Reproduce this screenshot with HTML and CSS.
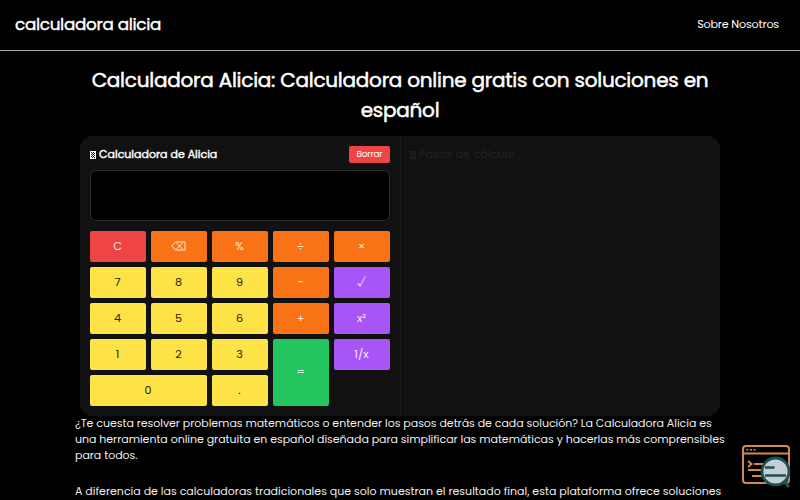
FILE: index.html
```html
<!DOCTYPE html>
<html lang="es">
<head>
<meta charset="utf-8">
<title>calculadora alicia</title>
<link rel="stylesheet" href="styles.css">
</head>
<body>
<header class="topbar">
  <a class="brand">calculadora alicia</a>
  <nav><a class="navlink">Sobre Nosotros</a></nav>
</header>
<main>
  <h1>Calculadora Alicia: Calculadora online gratis con soluciones en<br>español</h1>
  <section class="calc">
    <div class="pane">
      <div class="pane-head">
        <h2><i class="tofu"></i><span>Calculadora de Alicia</span></h2>
        <button class="clear">Borrar</button>
      </div>
      <div class="display"></div>
      <div class="keys">
        <button class="red">C</button><button class="op"><svg class="erase" width="15" height="10" viewBox="0 0 15 10" fill="none" stroke="currentColor" stroke-width="1"><path d="M.7 5 4.500 1H14v8H4.500zM5.500 2l6 6M11.500 2l-6 6"/></svg></button><button class="op">%</button><button class="op">÷</button><button class="op">×</button>
        <button>7</button><button>8</button><button>9</button><button class="op">−</button><button class="fn">√</button>
        <button>4</button><button>5</button><button>6</button><button class="op">+</button><button class="fn">x²</button>
        <button>1</button><button>2</button><button>3</button><button class="eq">=</button><button class="fn">1/x</button>
        <button class="wide">0</button><button>.</button>
      </div>
    </div>
    <div class="pane steps">
      <h2><i class="tofu"></i><span>Pasos de cálculo</span></h2>
    </div>
  </section>
  <article>
    <p class="intro">¿Te cuesta resolver problemas matemáticos o entender los pasos detrás de cada solución? La Calculadora Alicia es<br>una herramienta online gratuita en español diseñada para simplificar las matemáticas y hacerlas más comprensibles<br>para todos.</p>
    <p>A diferencia de las calculadoras tradicionales que solo muestran el resultado final, esta plataforma ofrece soluciones</p>
  </article>
</main>
<svg class="badge" width="52" height="46" viewBox="0 0 52 46" fill="none">
  <g stroke="#d2894f" stroke-width="2">
    <rect x="2" y="2" width="46" height="37" rx="3"/>
    <path d="M2 9.500h46"/>
    <path d="M5.500 5.800h2M9 5.800h2M12.500 5.800h2" stroke-width="1.500"/>
    <path d="m7 17 3.500 3L7 23M13 20h13M7 26h15M11 32h13"/>
  </g>
  <path d="m43 37 5 6" stroke="#1d4f57" stroke-width="3"/>
  <circle cx="34.500" cy="27.500" r="13.500" fill="#c3ced7" stroke="#1d4f57" stroke-width="2.800"/>
  <path d="M24 23.500h9.500M24 31.500h21" stroke="#1d4f57" stroke-width="2.500"/>
</svg>
</body>
</html>
```
FILE: styles.css
```css
* { box-sizing: border-box; }
html, body { height: 100%; }
body {
  margin: 0;
  background: #000;
  color: #fff;
  font-family: Poppins, Inter, sans-serif;
  overflow: hidden;
}
.topbar {
  height: 51px;
  padding: 0 21px 2px 15px;
  display: flex;
  align-items: center;
  justify-content: space-between;
  border-bottom: 1px solid #aaa69f;
}
.brand { font-size: 16.800px; font-weight: 400; -webkit-text-stroke: .4px; letter-spacing: -.3px; }
.navlink { font-size: 11.200px; letter-spacing: -.2px; position: relative; top: -2px; }
h1 {
  margin: 14px 0 11px;
  font-size: 20px;
  line-height: 30px;
  font-weight: 400;
  -webkit-text-stroke: .5px;
  letter-spacing: -.24px;
  text-align: center;
  white-space: nowrap;
}
h2 {
  margin: 0;
  font-size: 11px;
  line-height: 17px;
  font-weight: 400;
  -webkit-text-stroke: .4px;
  display: flex;
  align-items: center;
  gap: 3px;
}
.tofu {
  width: 6px;
  height: 8px;
  border: 1px solid;
  background: repeating-conic-gradient(currentColor 0 25%, transparent 0 50%) 0 0 / 2px 2px;
}
.calc {
  width: 640px;
  height: 280px;
  margin: 0 auto;
  display: grid;
  grid-template-columns: 321px 1fr;
  background: #111;
  border-radius: 13px;
}
.pane { padding: 10px; }
.pane:first-child { border-right: 1px solid #191919; }
.steps { padding-left: 9px; }
.steps h2 { color: #1a2024; letter-spacing: .22px; }
.pane-head { display: flex; justify-content: space-between; }
button {
  border: 0;
  padding: 0 1px 0 0;
  font: 400 11.200px/1 Poppins, Inter, sans-serif;
  border-radius: 2px;
  background: #fee347;
  color: #2a2108;
  display: flex;
  align-items: center;
  justify-content: center;
}
button.clear {
  width: 41px;
  height: 17px;
  padding: 0;
  font-size: 9px;
  letter-spacing: -.25px;
  background: #ef4444;
  color: #fff;
}
.display {
  height: 51px;
  margin: 7px 0 10px;
  background: #000;
  border: 1px solid #2b2b2b;
  border-radius: 6px;
}
.erase { margin-top: -1px; }
.keys {
  display: grid;
  grid-template-columns: repeat(5, 1fr);
  grid-auto-rows: 31px;
  gap: 5px;
}
.keys .red { background: #ef4444; color: #fde8e4; }
.keys .op { background: #f97316; color: #fff0df; }
.keys .fn { background: #a855f7; color: #f6eaff; }
.keys .eq { background: #22c55e; color: #e5ffe9; grid-row: span 2; padding-bottom: 2px; }
.keys .wide { grid-column: span 2; }
article {
  width: 650px;
  margin: -1px auto 0;
  font-size: 11px;
  line-height: 16px;
  white-space: nowrap;
  color: #eee;
}
article p { margin: 0 0 20px; }
.intro { letter-spacing: -.036px; }
.badge { position: fixed; left: 741px; top: 444px; }
```
